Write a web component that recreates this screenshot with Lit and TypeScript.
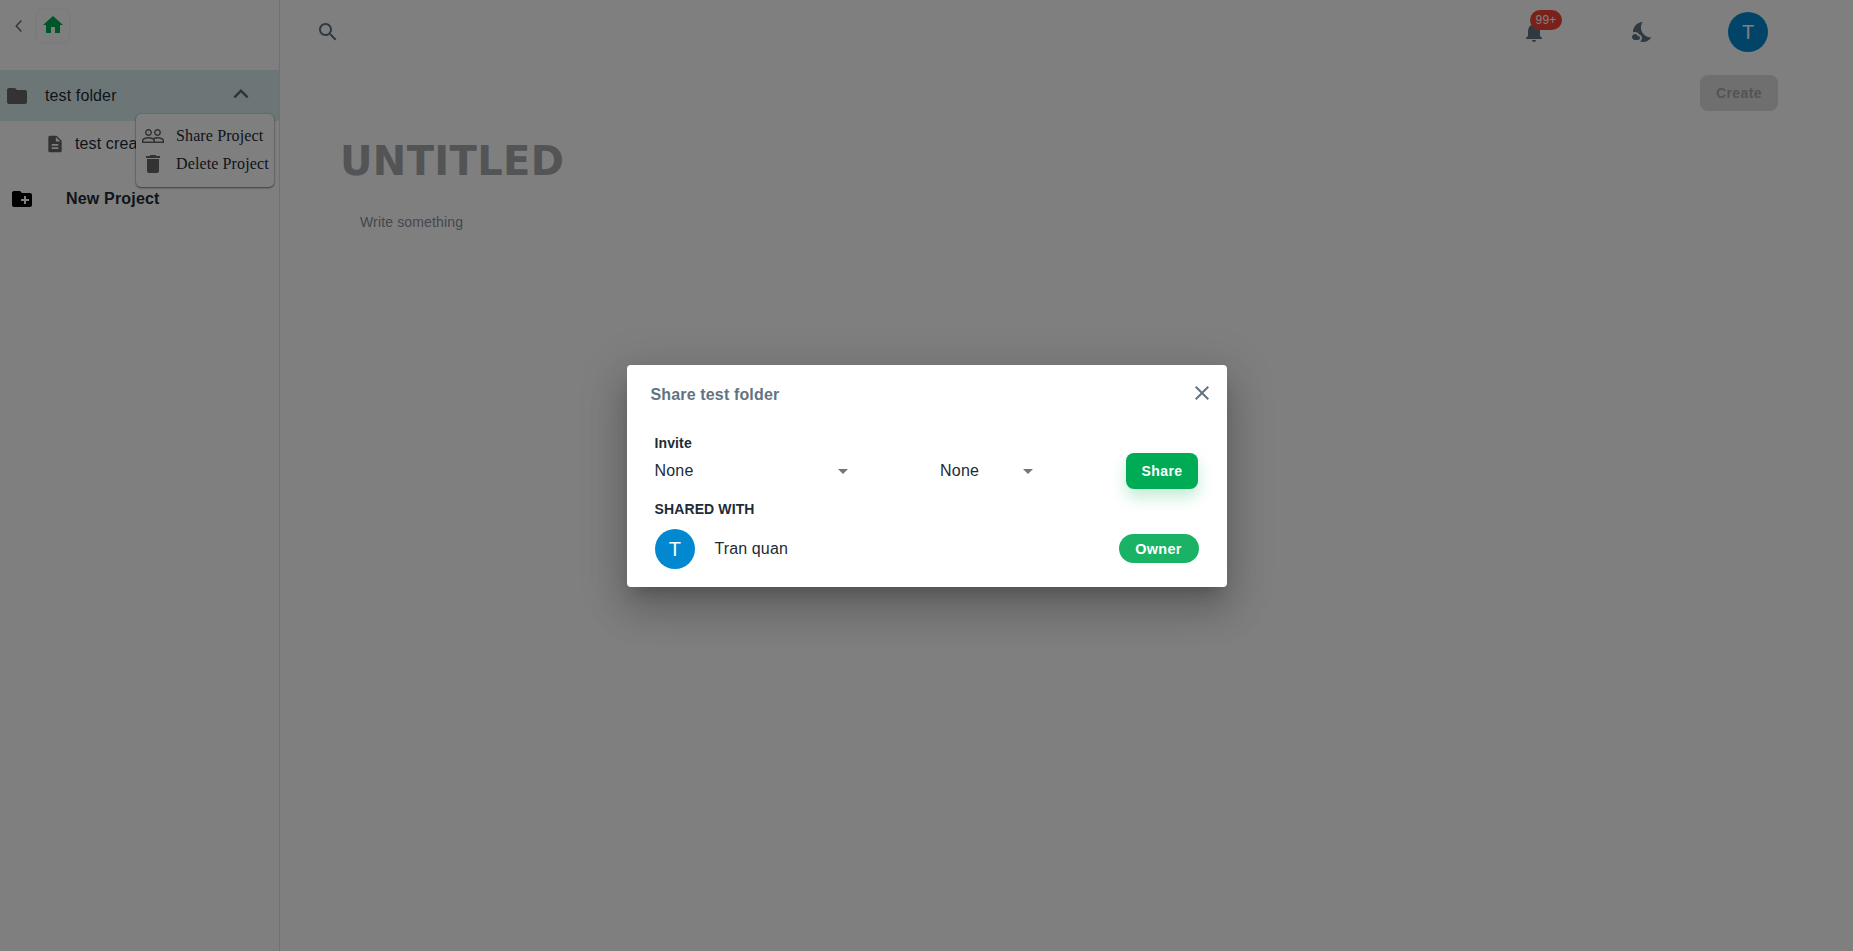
import { LitElement, html, css, svg } from "lit";
import { customElement, property } from "lit/decorators.js";

const ICONS: Record<string, string> = {
  home: "M10 20v-6h4v6h5v-8h3L12 3 2 12h3v8z",
  folder: "M10 4H4c-1.1 0-1.99.9-1.99 2L2 18c0 1.1.9 2 2 2h16c1.1 0 2-.9 2-2V8c0-1.1-.9-2-2-2h-8l-2-2z",
  less: "m12 8-6 6 1.41 1.41L12 10.83l4.59 4.58L18 14z",
  doc: "M14 2H6c-1.1 0-1.99.9-1.99 2L4 20c0 1.1.89 2 1.99 2H18c1.1 0 2-.9 2-2V8l-6-6zm2 16H8v-2h8v2zm0-4H8v-2h8v2zm-3-5V3.5L18.5 9H13z",
  newFolder: "M20 6h-8l-2-2H4c-1.11 0-1.99.89-1.99 2L2 18c0 1.11.89 2 2 2h16c1.11 0 2-.89 2-2V8c0-1.11-.89-2-2-2zm-1 8h-3v3h-2v-3h-3v-2h3V9h2v3h3v2z",
  people: "M16.5 13c-1.2 0-3.07.34-4.5 1-1.43-.67-3.3-1-4.5-1C5.33 13 1 14.08 1 16.25V19h22v-2.75c0-2.17-4.33-3.25-6.5-3.25zm-4 4.5h-10v-1.25c0-.54 2.56-1.75 5-1.75s5 1.21 5 1.75v1.25zm9 0H14v-1.25c0-.46-.2-.86-.52-1.22.88-.3 1.96-.53 3.02-.53 2.44 0 5 1.21 5 1.75v1.25zM7.5 12c1.93 0 3.5-1.57 3.5-3.5S9.43 5 7.5 5 4 6.57 4 8.5 5.57 12 7.5 12zm0-5.5c1.1 0 2 .9 2 2s-.9 2-2 2-2-.9-2-2 .9-2 2-2zm9 5.5c1.93 0 3.5-1.57 3.5-3.5S18.43 5 16.5 5 13 6.57 13 8.5s1.57 3.5 3.5 3.5zm0-5.5c1.1 0 2 .9 2 2s-.9 2-2 2-2-.9-2-2 .9-2 2-2z",
  trash: "M6 19c0 1.1.9 2 2 2h8c1.1 0 2-.9 2-2V7H6v12zM19 4h-3.5l-1-1h-5l-1 1H5v2h14V4z",
  search: "M15.5 14h-.79l-.28-.27C15.41 12.59 16 11.11 16 9.5 16 5.91 13.09 3 9.5 3S3 5.91 3 9.5 5.91 16 9.5 16c1.61 0 3.09-.59 4.23-1.57l.27.28v.79l5 4.99L20.49 19l-4.99-5zm-6 0C7.01 14 5 11.99 5 9.5S7.01 5 9.5 5 14 7.01 14 9.5 11.99 14 9.5 14z",
  bell: "M12 22c1.1 0 2-.9 2-2h-4c0 1.1.89 2 2 2zm6-6v-5c0-3.07-1.64-5.64-4.5-6.32V4c0-.83-.67-1.5-1.5-1.5s-1.5.67-1.5 1.5v.68C7.63 5.36 6 7.92 6 11v5l-2 2v1h16v-1l-2-2z",
  night: "M11.1 12.08c-2.33-4.51-.5-8.48.53-10.07C6.27 2.2 1.98 6.59 1.98 12c0 .14.02.28.02.42.62-.27 1.29-.42 2-.42 1.66 0 3.18.83 4.1 2.15C9.77 14.63 11 16.17 11 18c0 1.52-.87 2.83-2.12 3.51.98.32 2.03.5 3.11.5 3.5 0 6.58-1.8 8.37-4.52-2.36.23-6.98-.97-9.26-5.41zM7 16h-.18C6.4 14.84 5.3 14 4 14c-1.66 0-3 1.34-3 3s1.34 3 3 3h3c1.1 0 2-.9 2-2s-.9-2-2-2z",
  close: "M19 6.41 17.59 5 12 10.59 6.41 5 5 6.41 10.59 12 5 17.59 6.41 19 12 13.41 17.59 19 19 17.59 13.41 12z",
  drop: "m7 10 5 5 5-5z",
  back: "M15.9 5.3 14.5 4 7 12l7.5 8 1.4-1.3L9.6 12z",
};

@customElement("ui-icon")
class UiIcon extends LitElement {
  static styles = css`
    :host { display: block; width: 24px; height: 24px; flex: none; }
    svg { display: block; width: 100%; height: 100%; fill: currentColor; }
  `;
  @property() name = "";
  render() {
    return html`<svg viewBox="0 0 24 24">${svg`<path d=${ICONS[this.name] ?? ""}></path>`}</svg>`;
  }
}

@customElement("side-bar")
class SideBar extends LitElement {
  static styles = css`
    :host { display: block; position: relative; box-sizing: border-box; width: 280px; flex: none; border-right: 1px solid #dde0e4; color: #212b36; letter-spacing: .12px; }
    .top { display: flex; height: 70px; box-sizing: border-box; padding: 10px 0 0 5px; }
    .back { width: 22px; height: 28px; margin: 0 10px 0 0; padding: 7px 0 0 5px; color: #666; box-sizing: border-box; }
    .back ui-icon { width: 18px; height: 18px; }
    .home { width: 32px; height: 32px; box-sizing: border-box; padding: 3px 4px; border-radius: 6px; color: #00ab55; box-shadow: 0 0 3px rgba(0, 0, 0, .12); }
    .row { display: flex; align-items: center; font-size: 16px; line-height: 24px; }
    .folder { height: 51px; padding: 0 23px 0 5px; background: #dbedef; }
    .folder ui-icon { color: #666; }
    .folder .name { flex: 1; margin-left: 16px; }
    .folder .less { width: 30px; height: 30px; margin-bottom: 4px; }
    .child { height: 46px; padding-left: 45px; }
    .child ui-icon { width: 20px; height: 20px; color: #666; }
    .child .name { margin-left: 10px; }
    .new { margin-top: 8px; height: 48px; padding-left: 10px; font-weight: 700; }
    .new ui-icon { color: #000; }
    .new .name { margin-left: 32px; letter-spacing: .18px; }
    .menu { position: absolute; left: 136px; top: 114px; width: 138px; height: 72.5px; box-sizing: border-box; padding: 8px 5px; border-radius: 5px; background: #fff; font-family: "Liberation Serif", serif; white-space: nowrap; box-shadow: 0 1px 2px rgba(0, 0, 0, .5), 0 0 2px rgba(0, 0, 0, .25); }
    .item { display: flex; align-items: center; height: 28px; gap: 11px; font-size: 16px; }
    .item ui-icon { color: #666; }
  `;
  render() {
    return html`
      <div class="top">
        <div class="back"><ui-icon name="back"></ui-icon></div>
        <div class="home"><ui-icon name="home"></ui-icon></div>
      </div>
      <div class="row folder"><ui-icon name="folder"></ui-icon><span class="name">test folder</span><ui-icon class="less" name="less"></ui-icon></div>
      <div class="row child"><ui-icon name="doc"></ui-icon><span class="name">test crea</span></div>
      <div class="row new"><ui-icon name="newFolder"></ui-icon><span class="name">New Project</span></div>
      <div class="menu">
        <div class="item"><ui-icon name="people"></ui-icon><span>Share Project</span></div>
        <div class="item"><ui-icon name="trash"></ui-icon><span>Delete Project</span></div>
      </div>`;
  }
}

@customElement("main-pane")
class MainPane extends LitElement {
  static styles = css`
    :host { display: block; flex: 1; }
    .bar { display: flex; align-items: center; height: 64px; box-sizing: border-box; padding: 0 85px 0 36px; color: #637381; }
    .search { margin-right: auto; }
    .bell { position: relative; margin-right: 85px; }
    .badge { position: absolute; left: 8px; top: -10px; width: 32px; height: 20px; border-radius: 10px; background: #f44336; color: #fff; font-size: 12px; line-height: 20px; text-align: center; letter-spacing: .2px; }
    .night { margin-right: 73px; }
    .avatar { width: 40px; height: 40px; border-radius: 50%; background: #0288d1; color: #fff; font-size: 20px; line-height: 40px; text-align: center; }
    .actions { display: flex; justify-content: flex-end; padding: 11px 75px 0 0; }
    .create { width: 78px; height: 36px; border-radius: 8px; background: #dfdfdf; color: #a8a8a8; font-size: 14px; font-weight: 700; line-height: 36px; letter-spacing: .4px; text-align: center; }
    h1 { margin: 26px 0 0 60px; font: 700 40px/48px "DejaVu Sans", sans-serif; letter-spacing: .35px; color: #a6a8aa; }
    p { margin: 25px 0 0 80px; font-size: 14px; line-height: 24px; letter-spacing: .15px; color: #8a8f98; }
  `;
  render() {
    return html`
      <div class="bar">
        <ui-icon class="search" name="search"></ui-icon>
        <div class="bell"><ui-icon name="bell"></ui-icon><span class="badge">99+</span></div>
        <ui-icon class="night" name="night"></ui-icon>
        <div class="avatar">T</div>
      </div>
      <div class="actions"><div class="create">Create</div></div>
      <h1>UNTITLED</h1>
      <p>Write something</p>`;
  }
}

@customElement("share-dialog")
class ShareDialog extends LitElement {
  static styles = css`
    :host { display: block; box-sizing: border-box; width: 600px; height: 222px; border-radius: 4px; background: #fff; color: #212b36; font-size: 16px; letter-spacing: .12px; box-shadow: 0 11px 15px -7px rgba(0, 0, 0, .2), 0 24px 38px 3px rgba(0, 0, 0, .14), 0 9px 46px 8px rgba(0, 0, 0, .12); }
    .head { display: flex; justify-content: space-between; height: 42px; box-sizing: border-box; padding: 16px 13px 0 24px; color: #637381; font-weight: 700; line-height: 28px; letter-spacing: .15px; }
    .body { padding: 25px 28px 0; }
    .label { font-size: 14px; font-weight: 700; line-height: 22px; }
    .form { display: flex; align-items: center; height: 36px; margin-top: -1px; }
    .select { display: flex; align-items: center; justify-content: space-between; line-height: 24px; letter-spacing: .2px; }
    .select ui-icon { color: #757575; }
    .user { width: 200px; margin-right: 85px; }
    .role { width: 100px; text-indent: .6px; }
    .share { margin-left: auto; margin-right: 1px; width: 72px; height: 36px; border-radius: 8px; background: #00ab55; color: #fff; font-size: 14px; font-weight: 700; line-height: 36px; letter-spacing: .4px; text-indent: 1px; text-align: center; box-shadow: 0 8px 16px rgba(0, 171, 85, .24); }
    .with { margin-top: 9px; }
    .person { display: flex; align-items: center; margin-top: 9px; height: 40px; }
    .avatar { width: 40px; height: 40px; border-radius: 50%; background: #0288d1; color: #fff; font-size: 20px; line-height: 40px; text-align: center; text-indent: 1px; margin-right: 20px; }
    .owner { margin-left: auto; width: 80px; height: 29px; border-radius: 14.5px; background: #1ab366; color: #fff; font-size: 14.4px; font-weight: 700; line-height: 30px; letter-spacing: .35px; text-align: center; }
  `;
  render() {
    return html`
      <div class="head"><span>Share test folder</span><ui-icon name="close"></ui-icon></div>
      <div class="body">
        <div class="label">Invite</div>
        <div class="form">
          <div class="select user"><span>None</span><ui-icon name="drop"></ui-icon></div>
          <div class="select role"><span>None</span><ui-icon name="drop"></ui-icon></div>
          <div class="share">Share</div>
        </div>
        <div class="label with">SHARED WITH</div>
        <div class="person"><div class="avatar">T</div><span>Tran quan</span><div class="owner">Owner</div></div>
      </div>`;
  }
}

@customElement("app-root")
class AppRoot extends LitElement {
  static styles = css`
    :host { display: block; position: relative; height: 951px; overflow: hidden; background: #fff; font-family: "Liberation Sans", Arial, sans-serif; }
    .page { display: flex; height: 100%; }
    .backdrop { position: absolute; inset: 0; display: flex; align-items: center; justify-content: center; background: rgba(0, 0, 0, .5); }
  `;
  render() {
    return html`
      <div class="page"><side-bar></side-bar><main-pane></main-pane></div>
      <div class="backdrop"><share-dialog></share-dialog></div>`;
  }
}
